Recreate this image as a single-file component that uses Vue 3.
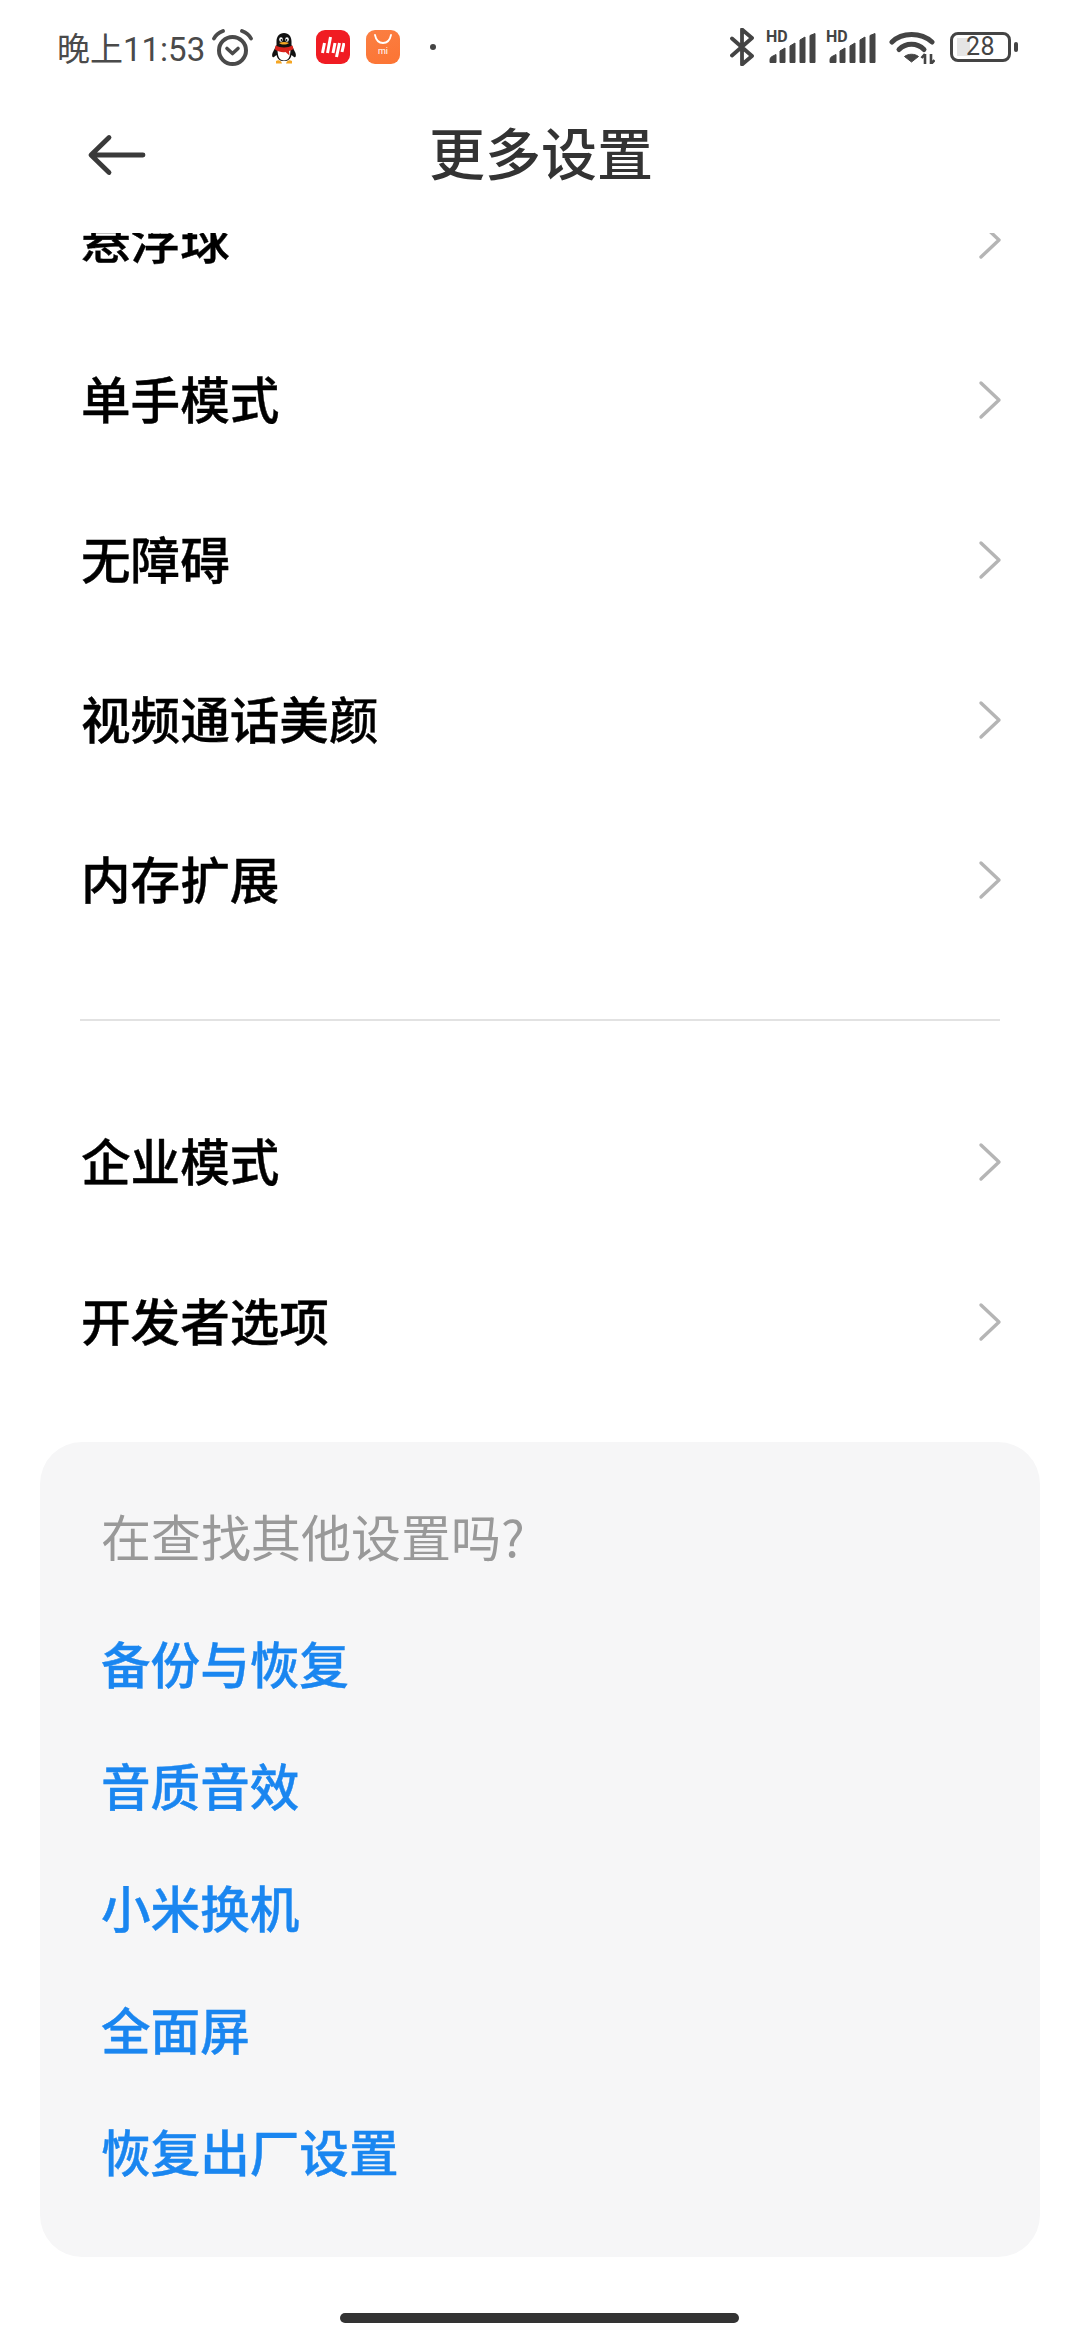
<template>
  <div class="page">
    <div class="status-bar">
      <div class="status-left">
        <span class="time">晚上11:53</span>
        <svg class="alarm" width="41" height="38" viewBox="0 0 41 38">
          <circle cx="20.500" cy="21.500" r="13.500" fill="none" stroke="#4a4a4a" stroke-width="4" />
          <path d="M15 19.500l5.500 5 5.500-5" fill="none" stroke="#4a4a4a" stroke-width="3.600" stroke-linecap="round" stroke-linejoin="round" />
          <path d="M2 9.500Q4.500 4.500 11 2M39 9.500Q36.500 4.500 30 2" fill="none" stroke="#4a4a4a" stroke-width="3.800" stroke-linecap="round" />
        </svg>
        <svg class="qq" width="26" height="31" viewBox="0 0 26 31">
          <path d="M13 0C8 0 5.500 4 5.500 8.500v3.500L1.500 20c-1 3 0 5 1.500 4l2.500-2c1 4 3 6 7.500 6s6.500-2 7.500-6l2.500 2c1.500 1 2.500-1 1.500-4l-4-8V8.500C20.500 4 18 0 13 0z" fill="#111" />
          <path d="M6.500 16c0 8 2 11.500 6.500 11.500S19.500 24 19.500 16z" fill="#fff" />
          <path d="M4.500 12.500c5 2.500 12 2.500 17 0l1 3.500c-1.500 1-3 1.500-4.500 2l.5 4.500-4-3.500c-3 .5-7 0-10.500-2.500z" fill="#d9231c" />
          <ellipse cx="10" cy="6.500" rx="1.800" ry="2.300" fill="#fff" />
          <ellipse cx="16" cy="6.500" rx="1.800" ry="2.300" fill="#fff" />
          <circle cx="10.500" cy="7" r="0.900" fill="#111" />
          <circle cx="15.500" cy="7" r="0.900" fill="#111" />
          <path d="M8 10c3-1.500 7-1.500 10 0-3 2-7 2-10 0z" fill="#f5a623" />
          <path d="M5 28c2-1.500 5-1 6 2.500H5zM21 28c-2-1.500-5-1-6 2.500h6z" fill="#f5a623" />
        </svg>
        <div class="app-icon app-red">
          <svg width="24" height="24" viewBox="0 0 24 24">
            <path d="M3.500 8L1.500 18M9.500 2L6.500 18M14 8l-2 10M18.500 8l-3 14M23 8l-2 9" fill="none" stroke="#fff" stroke-width="3" />
          </svg>
        </div>
        <div class="app-icon app-orange">
          <svg width="20" height="11" viewBox="0 0 20 11">
            <path d="M2 1c1 5 4 8 8 8s7-3 8-8" fill="none" stroke="#fff" stroke-width="1.800" stroke-linecap="round" />
          </svg>
          <span class="mi">mi</span>
        </div>
        <span class="dot"></span>
      </div>
      <div class="status-right">
        <svg class="bt" width="24" height="38" viewBox="0 0 24 38">
          <path d="M2 10.500l20 17.500-10 8.500V1.500l10 8.500L2 27.500" fill="none" stroke="#444" stroke-width="3.800" stroke-linecap="round" stroke-linejoin="round" />
        </svg>
        <div class="signal" v-for="n in 2" :key="n">
          <span class="hd">HD</span>
          <svg width="47" height="30" viewBox="0 0 47 30">
            <path d="M1 29.500v-3q0-2 2-3l4-2v8zM11 29.500V18l5-3v14.500zM21 29.500V13l5-3v19.500zM31 29.500V7l5-3v25.500zM41 29.500V2.500l5-2v29z" fill="#444" stroke="#444" stroke-width="1" stroke-linejoin="round" />
          </svg>
        </div>
        <svg class="wifi" width="46" height="34" viewBox="0 0 46 34">
          <path d="M3 12C13 2 32 2 43 12" fill="none" stroke="#444" stroke-width="5" stroke-linecap="round" />
          <path d="M10 19.500C17 12.500 28 12.500 35 19.500" fill="none" stroke="#444" stroke-width="5" stroke-linecap="round" />
          <path d="M22.500 32l-7-5.500c4-3 10-3 14 0z" fill="#444" stroke="#444" stroke-linejoin="round" />
          <path d="M36 24v10M36 24l-3.500 4M42 34V24M42 34l3.500-4" fill="none" stroke="#444" stroke-width="2.600" />
        </svg>
        <div class="battery">
          <div class="battery-body">
            <span class="battery-fill"></span>
            <span class="battery-num">28</span>
          </div>
          <span class="battery-cap"></span>
        </div>
      </div>
    </div>

    <header class="title-bar">
      <svg class="back" width="60" height="42" viewBox="0 0 60 42">
        <path d="M56 21H5M22 3.500L4 21l18 17.500" fill="none" stroke="#3a3a3a" stroke-width="4.800" stroke-linecap="round" stroke-linejoin="round" />
      </svg>
      <h1>更多设置</h1>
    </header>

    <div class="scroller">
      <ul class="group first">
        <li v-for="item in mainItems" :key="item" class="row">
          <span class="row-label">{{ item }}</span>
          <svg width="24" height="40" viewBox="0 0 24 40">
            <path d="M3 3l18 17L3 37" fill="none" stroke="#b5b5b5" stroke-width="3.400" stroke-linecap="round" stroke-linejoin="round" />
          </svg>
        </li>
      </ul>
      <div class="divider"></div>
      <ul class="group">
        <li v-for="item in otherItems" :key="item" class="row">
          <span class="row-label">{{ item }}</span>
          <svg width="24" height="40" viewBox="0 0 24 40">
            <path d="M3 3l18 17L3 37" fill="none" stroke="#b5b5b5" stroke-width="3.400" stroke-linecap="round" stroke-linejoin="round" />
          </svg>
        </li>
      </ul>
      <section class="card">
        <p class="card-title">在查找其他设置吗?</p>
        <a v-for="link in links" :key="link" class="card-link">{{ link }}</a>
      </section>
    </div>

    <div class="home-bar"></div>
  </div>
</template>

<script setup>
const mainItems = ['悬浮球', '单手模式', '无障碍', '视频通话美颜', '内存扩展']
const otherItems = ['企业模式', '开发者选项']
const links = ['备份与恢复', '音质音效', '小米换机', '全面屏', '恢复出厂设置']
</script>

<style>
html,
body {
  margin: 0;
  background: #fff;
}
</style>

<style scoped>
.page {
  width: 1080px;
  height: 2340px;
  display: flex;
  flex-direction: column;
  background: #fff;
  overflow: hidden;
  position: relative;
  font-family: "Noto Sans CJK SC", "Noto Sans", sans-serif;
}

.status-bar {
  height: 94px;
  padding: 0 62px 0 57px;
  display: flex;
  justify-content: space-between;
  align-items: center;
  box-sizing: border-box;
  color: #444;
}

.status-left,
.status-right {
  display: flex;
  align-items: center;
}

.time {
  width: 147px;
  font-size: 33px;
  font-family: Roboto, "Noto Sans CJK SC", sans-serif;
  white-space: nowrap;
  color: #4a4a4a;
}

.alarm {
  margin: 2px 0 0 8px;
}

.qq {
  margin: 2px 0 0 18px;
}

.app-icon {
  width: 34px;
  height: 34px;
  border-radius: 9px;
  display: flex;
  align-items: center;
  justify-content: center;
  flex-direction: column;
}

.app-red {
  margin-left: 19px;
  background: #f01c23;
}

.app-orange {
  margin-left: 16px;
  background: linear-gradient(160deg, #fb7f43, #fc7433);
  justify-content: flex-start;
  padding-top: 4px;
  box-sizing: border-box;
}

.mi {
  font-size: 9px;
  line-height: 9px;
  color: #fff;
  margin-top: 2px;
  font-family: Roboto, sans-serif;
}

.dot {
  width: 6px;
  height: 6px;
  border-radius: 50%;
  background: #444;
  margin-left: 30px;
}

.signal {
  position: relative;
  width: 47px;
  height: 30px;
  margin: 2px 0 0 15px;
  display: flex;
}

.signal + .signal {
  margin-left: 13px;
}

.hd {
  position: absolute;
  left: -3px;
  top: -4px;
  font-size: 16px;
  line-height: 16px;
  font-weight: 700;
  font-family: Roboto, sans-serif;
  color: #444;
}

.wifi {
  margin: 0 0 0 13px;
}

.battery {
  margin-left: 15px;
  display: flex;
  align-items: center;
}

.battery-body {
  position: relative;
  width: 61px;
  height: 30px;
  border: 3.500px solid #444;
  border-radius: 8px;
  box-sizing: border-box;
  text-align: center;
}

.battery-fill {
  position: absolute;
  left: 4px;
  top: 3px;
  bottom: 3px;
  width: 13px;
  background: #e5e5e5;
}

.battery-num {
  position: relative;
  font-size: 25px;
  line-height: 23px;
  letter-spacing: 0.5px;
  font-family: Roboto, sans-serif;
  color: #444;
  display: block;
}

.battery-cap {
  width: 4px;
  height: 10px;
  margin-left: 3px;
  background: #444;
  border-radius: 2px;
}

.title-bar {
  height: 139px;
  position: relative;
  display: flex;
  align-items: center;
  justify-content: center;
}

.back {
  position: absolute;
  left: 87px;
  top: 40px;
}

.title-bar h1 {
  margin: 0 0 26px 2px;
  font-size: 56px;
  font-weight: 500;
  color: #333;
}

.scroller {
  flex: 1;
  min-height: 0;
  overflow: hidden;
}

.group {
  list-style: none;
  margin: 0;
  padding: 0;
}

.first {
  margin-top: -73px;
}

.row {
  height: 160px;
  padding: 0 78px 0 81px;
  display: flex;
  justify-content: space-between;
  align-items: center;
  font-size: 49.600px;
  font-weight: 500;
  color: #000;
}

.row-label {
  margin-bottom: 6px;
  -webkit-text-stroke: 0.4px #000;
}

.divider {
  height: 1.500px;
  margin: 59px 80px 61px;
  background: #e2e2e2;
}

.card {
  margin: 40px 40px 0;
  height: 815px;
  padding: 64px 61px 0;
  box-sizing: border-box;
  background: #f6f6f7;
  border-radius: 42px;
}

.card-title {
  margin: 0 0 37px;
  height: 58px;
  line-height: 58px;
  font-size: 50px;
  color: #999;
}

.card-link {
  display: block;
  height: 122px;
  line-height: 122px;
  font-size: 49.600px;
  font-weight: 500;
  color: #1a86f0;
  -webkit-text-stroke: 0.4px #1a86f0;
}

.home-bar {
  position: absolute;
  left: 340px;
  top: 2313px;
  width: 399px;
  height: 10px;
  border-radius: 5px;
  background: #333;
}
</style>
